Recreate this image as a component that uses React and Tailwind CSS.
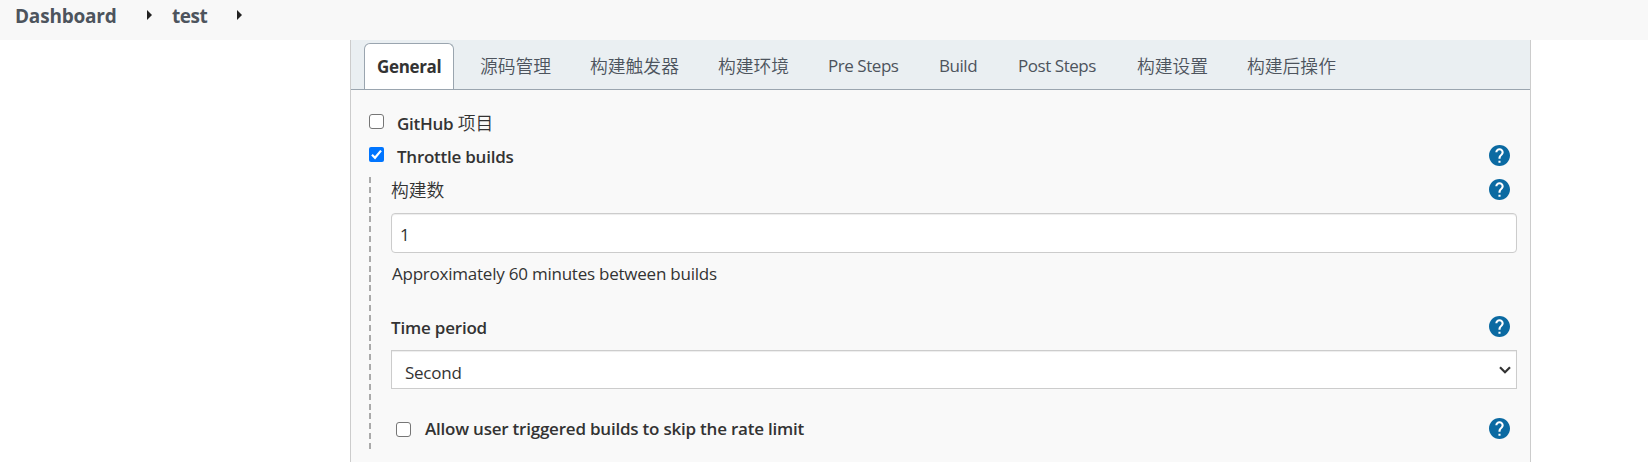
import React from "react";

const tabs = [
  { label: "源码管理", box: "ml-[26px] w-[71px]", cjk: true },
  { label: "构建触发器", box: "ml-[39px] w-[89px]", cjk: true },
  { label: "构建环境", box: "ml-[39px] w-[71px]", cjk: true },
  { label: "Pre Steps", box: "ml-[39px] w-[72px]" },
  { label: "Build", box: "ml-[39px] w-[39px]" },
  { label: "Post Steps", box: "ml-[40px] w-[80px]" },
  { label: "构建设置", box: "ml-[39px] w-[71px]", cjk: true },
  { label: "构建后操作", box: "ml-[39px] w-[89px]", cjk: true },
];

function Arrow() {
  return (
    <svg className="h-[10px] w-[5px]" viewBox="0 0 5 10" fill="#222">
      <path d="M0 0L5 5L0 10Z" />
    </svg>
  );
}

function Help() {
  return (
    <svg className="mr-[20px] h-[21px] w-[21px] shrink-0" viewBox="2 2 20 20" fill="#0b6aa2">
      <circle cx="12" cy="12" r="8" fill="#fff" />
      <path d="M12 2C6.48 2 2 6.48 2 12s4.48 10 10 10 10-4.48 10-10S17.52 2 12 2zm1 17h-2v-2h2v2zm2.07-7.75l-.9.92C13.45 12.9 13 13.5 13 15h-2v-.5c0-1.1.45-2.1 1.17-2.83l1.24-1.26c.37-.36.59-.86.59-1.41 0-1.1-.9-2-2-2s-2 .9-2 2H8c0-2.21 1.79-4 4-4s4 1.79 4 4c0 .88-.36 1.68-.93 2.25z" />
    </svg>
  );
}

function Checkbox({ checked }) {
  return checked ? (
    <svg className="h-[15px] w-[15px] shrink-0" viewBox="0 0 15 15">
      <rect width="15" height="15" rx="2" fill="#0075ff" />
      <path d="M3 7.8L6 10.8L12 3.6" fill="none" stroke="#fff" strokeWidth="2.2" />
    </svg>
  ) : (
    <span className="h-[15px] w-[15px] shrink-0 rounded-[3px] border border-[#767676] bg-white" />
  );
}

export default function App() {
  return (
    <div className="flex h-[462px] w-[1648px] flex-col overflow-hidden bg-white font-['Open_Sans','Noto_Sans_CJK_SC',sans-serif] text-[17px] text-[#333] whitespace-nowrap">
      <header className="flex h-[40px] shrink-0 items-start bg-[#f8f8f8] pl-[15px] text-[19px] leading-[32px] font-bold text-[#4d545d]">
        <span className="w-[132px] tracking-[-0.2px]">Dashboard</span>
        <span className="mt-[10px] flex"><Arrow /></span>
        <span className="ml-[20px] w-[65px] tracking-[-0.45px]">test</span>
        <span className="mt-[10px] flex"><Arrow /></span>
      </header>

      <main className="ml-[350px] flex w-[1181px] grow flex-col border-x border-[#ccc] bg-[#f9f9f9]">
        <nav className="flex h-[50px] shrink-0 items-end border-b border-[#9aa5af] bg-[#eaeff2] pl-[13px] text-[#4d545d]">
          <div className="h-[46px] w-[90px] rounded-t-[6px] border border-b-0 border-[#9aa5af] bg-white pl-[12px] leading-[45px] font-bold tracking-[-0.35px] text-[#333]">
            General
          </div>
          {tabs.map((t) => (
            <div key={t.label} className={`${t.box} ${t.cjk ? "text-[17.8px] font-[350]" : "font-normal tracking-[-0.45px]"} h-[46px] leading-[46px]`}>
              {t.label}
            </div>
          ))}
        </nav>

        <div className="flex flex-col pl-[18px]">
          <div className="mt-[17px] flex h-[33px] items-center font-semibold">
            <span className="-mt-[4px] flex"><Checkbox /></span>
            <span className="ml-[13px] tracking-[-0.25px]">GitHub <span className="text-[17.8px] font-[350] tracking-normal">项目</span></span>
          </div>
          <div className="flex h-[33px] items-center font-semibold">
            <span className="-mt-[4px] flex"><Checkbox checked /></span>
            <span className="ml-[13px] grow tracking-[-0.25px]">Throttle builds</span>
            <span className="-mt-[2px] flex"><Help /></span>
          </div>

          <div className="mt-[4px] flex h-[272px]">
            <div className="w-[2px] shrink-0 bg-[repeating-linear-gradient(to_bottom,#aaa_0px,#aaa_6px,transparent_6px,transparent_9.85px)]" />
            <div className="ml-[20px] flex w-[1139px] flex-col">
              <div className="flex h-[36px] items-start">
                <span className="grow text-[17.8px] leading-[26px] font-[350]">构建数</span>
                <span className="mt-[2px] flex"><Help /></span>
              </div>
              <div className="h-[40px] w-[1126px] rounded-[4px] border border-[#ccc] bg-white pl-[8px] leading-[41px] shadow-[inset_0_1px_1px_rgba(0,0,0,0.075)]">1</div>
              <div className="mt-[8px] h-[26px] pl-px leading-[25px] tracking-[-0.23px]">Approximately 60 minutes between builds</div>
              <div className="mt-[27px] flex h-[36px] items-start font-semibold">
                <span className="mt-px grow leading-[26px] tracking-[-0.2px]">Time period</span>
                <span className="mt-[2px] flex"><Help /></span>
              </div>
              <div className="flex h-[39px] w-[1126px] items-center justify-between border border-[#ccc] bg-white pr-[5px] pl-[13px] shadow-[inset_0_1px_1px_rgba(0,0,0,0.075)]">
                <span className="mt-[6px] tracking-[-0.25px]">Second</span>
                <svg className="h-[8px] w-[12px]" viewBox="0 0 12 8" fill="none" stroke="#333" strokeWidth="2.2">
                  <path d="M1 1.2L6 6.2L11 1.2" />
                </svg>
              </div>
              <div className="mt-[27px] flex h-[26px] items-center pl-[5px] font-semibold">
                <Checkbox />
                <span className="ml-[14px] grow tracking-[-0.22px]">Allow user triggered builds to skip the rate limit</span>
                <span className="-mt-px flex"><Help /></span>
              </div>
            </div>
          </div>
        </div>
      </main>
    </div>
  );
}
